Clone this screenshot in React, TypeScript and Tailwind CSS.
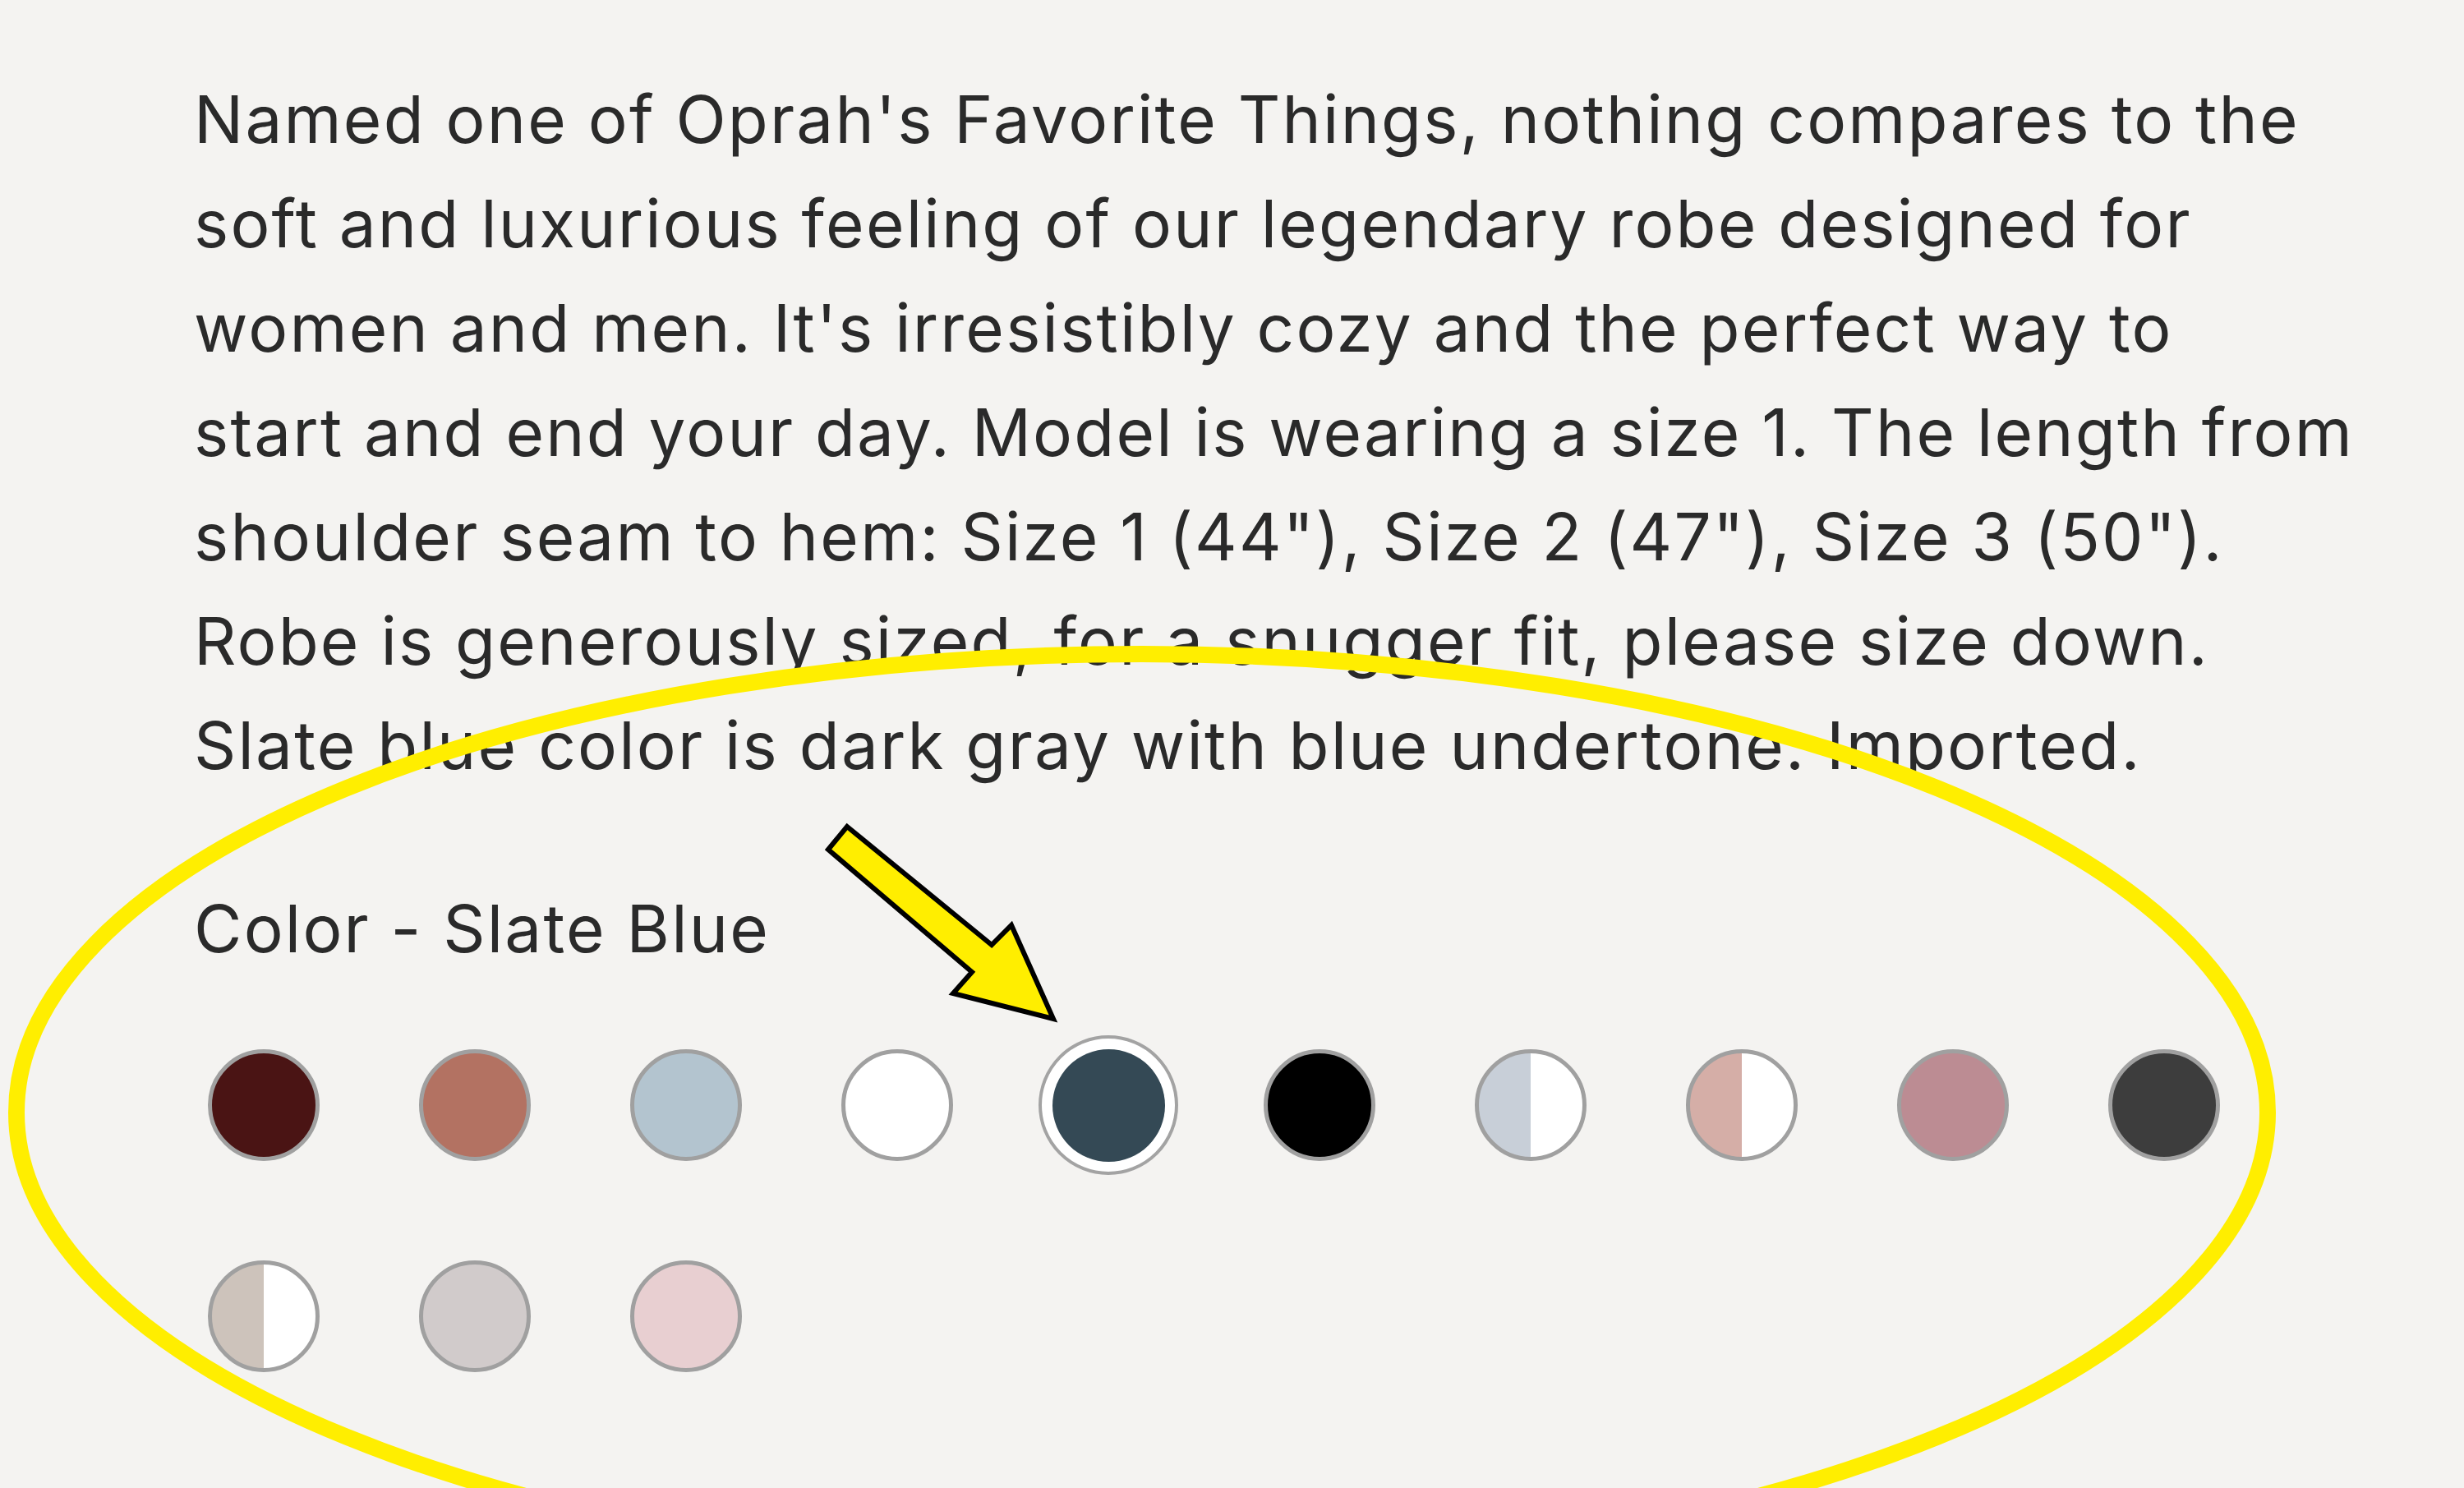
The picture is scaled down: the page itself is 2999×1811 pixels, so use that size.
import React from "react";

type Swatch = {
  name: string;
  left: string;
  right?: string;
};

const lines = [
  "Named one of Oprah's Favorite Things, nothing compares to the",
  "soft and luxurious feeling of our legendary robe designed for",
  "women and men. It's irresistibly cozy and the perfect way to",
  "start and end your day. Model is wearing a size 1. The length from",
  'shoulder seam to hem: Size 1 (44"), Size 2 (47"), Size 3 (50").',
  "Robe is generously sized, for a snugger fit, please size down.",
  "Slate blue color is dark gray with blue undertone. Imported.",
];

const swatches: Swatch[] = [
  { name: "Burgundy", left: "#4a1414" },
  { name: "Terracotta", left: "#b37262" },
  { name: "Light Blue", left: "#b3c4cf" },
  { name: "White", left: "#ffffff" },
  { name: "Slate Blue", left: "#344955" },
  { name: "Black", left: "#000000" },
  { name: "Light Blue / White", left: "#c8cfd8", right: "#ffffff" },
  { name: "Blush / White", left: "#d5aea7", right: "#ffffff" },
  { name: "Mauve", left: "#bc8c93" },
  { name: "Charcoal", left: "#3d3d3d" },
  { name: "Taupe / White", left: "#cdc3bb", right: "#ffffff" },
  { name: "Dove Gray", left: "#d1cbcb" },
  { name: "Pink", left: "#e8cfd1" },
];

const selected = "Slate Blue";

function SwatchButton({ swatch }: { swatch: Swatch }) {
  const isSelected = swatch.name === selected;
  const fill = swatch.right
    ? `linear-gradient(90deg, ${swatch.left} 50%, ${swatch.right} 50%)`
    : swatch.left;

  if (isSelected) {
    return (
      <button
        title={swatch.name}
        className="w-[170px] h-[170px] rounded-full border-[4px] border-[#a3a3a3] bg-white flex items-center justify-center"
      >
        <span
          className="block w-[137px] h-[137px] rounded-full"
          style={{ background: fill }}
        />
      </button>
    );
  }

  return (
    <button
      title={swatch.name}
      className="w-[170px] h-[170px] flex items-center justify-center"
    >
      <span
        className="block w-[136px] h-[136px] rounded-full border-[5px] border-[#a0a0a0]"
        style={{ background: fill }}
      />
    </button>
  );
}

export default function App() {
  return (
    <div className="relative w-[2999px] h-[1811px] overflow-hidden bg-[#f4f3f1] font-['Inter',sans-serif] text-[#2a2a2a] tracking-[2.2px]">
      <div className="pl-[236px] pt-[81px]">
        {/* Description */}
        <div className="text-[80px] leading-[127px]">
          {lines.map((line) => (
            <div key={line} className="whitespace-nowrap">
              {line}
            </div>
          ))}
        </div>

        {/* Color label */}
        <div className="mt-[96px] text-[80px] leading-[127px] whitespace-nowrap">
          Color - {selected}
        </div>

        {/* Swatches */}
        <div className="mt-[67px] grid grid-cols-[repeat(10,170px)] gap-x-[87px] gap-y-[87px]">
          {swatches.map((s) => (
            <SwatchButton key={s.name} swatch={s} />
          ))}
        </div>
      </div>

      {/* Annotation overlay */}
      <svg
        className="absolute inset-0 pointer-events-none"
        width="2999"
        height="1811"
        viewBox="0 0 2999 1811"
      >
        <ellipse
          cx="1390"
          cy="1354"
          rx="1370"
          ry="558"
          fill="none"
          stroke="#ffee00"
          strokeWidth="20"
        />
        <polygon
          points="1031,1006 1207,1150 1231,1126 1282,1240 1160,1209 1183,1183 1008,1034"
          fill="#ffee00"
          stroke="#000000"
          strokeWidth="6"
          strokeLinejoin="miter"
        />
      </svg>
    </div>
  );
}
